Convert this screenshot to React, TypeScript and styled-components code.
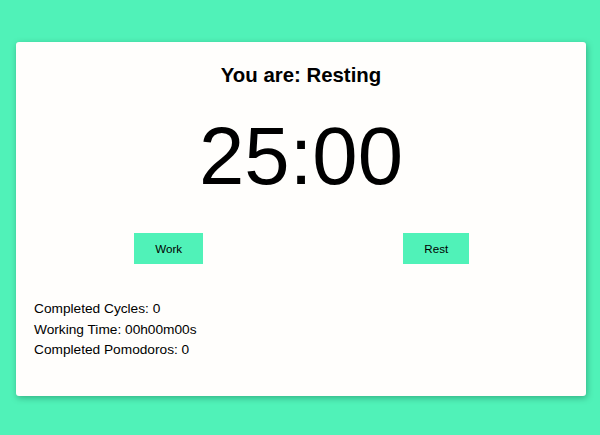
import React from "react";
import styled, { createGlobalStyle } from "styled-components";

const Global = createGlobalStyle`
  html, body { margin: 0; padding: 0; }
  body {
    background: #50f2b8;
    font-family: "Liberation Sans", Arial, sans-serif;
    color: #000;
    width: 600px;
    height: 435px;
    overflow: hidden;
  }
`;

const Page = styled.div`
  padding: 42px 14px 0 16px;
`;

const Card = styled.div`
  background: #fffefc;
  border-radius: 3px;
  box-shadow: 1px 2px 6px rgba(0, 60, 40, 0.35);
  height: 354px;
  box-sizing: border-box;
  padding: 22px 18px 0 18px;
  display: flex;
  flex-direction: column;
`;

const Title = styled.h2`
  margin: 0;
  font-size: 20.4px;
  font-weight: 700;
  text-align: center;
  line-height: 23px;
`;

const Timer = styled.div`
  font-size: 81.5px;
  line-height: 92px;
  text-align: center;
  margin-top: 23px;
`;

const Controls = styled.div`
  display: grid;
  grid-template-columns: 1fr 1fr;
  justify-items: center;
  margin: 31px -2px 0 1px;
`;

const Button = styled.button`
  background: #50f2b8;
  border: none;
  height: 31px;
  padding: 0 21px;
  font-family: "Liberation Sans", Arial, sans-serif;
  font-size: 11.6px;
  color: #000;
  cursor: pointer;
`;

const Stats = styled.div`
  margin-top: 35px;
  font-size: 13.7px;
  line-height: 20.5px;
`;

const Line = styled.div``;

export default function App() {
  return (
    <>
      <Global />
      <Page>
        <Card>
          <Title>You are: Resting</Title>
          <Timer>25:00</Timer>
          <Controls>
            <Button>Work</Button>
            <Button>Rest</Button>
          </Controls>
          <Stats>
            <Line>Completed Cycles: 0</Line>
            <Line>Working Time: 00h00m00s</Line>
            <Line>Completed Pomodoros: 0</Line>
          </Stats>
        </Card>
      </Page>
    </>
  );
}
